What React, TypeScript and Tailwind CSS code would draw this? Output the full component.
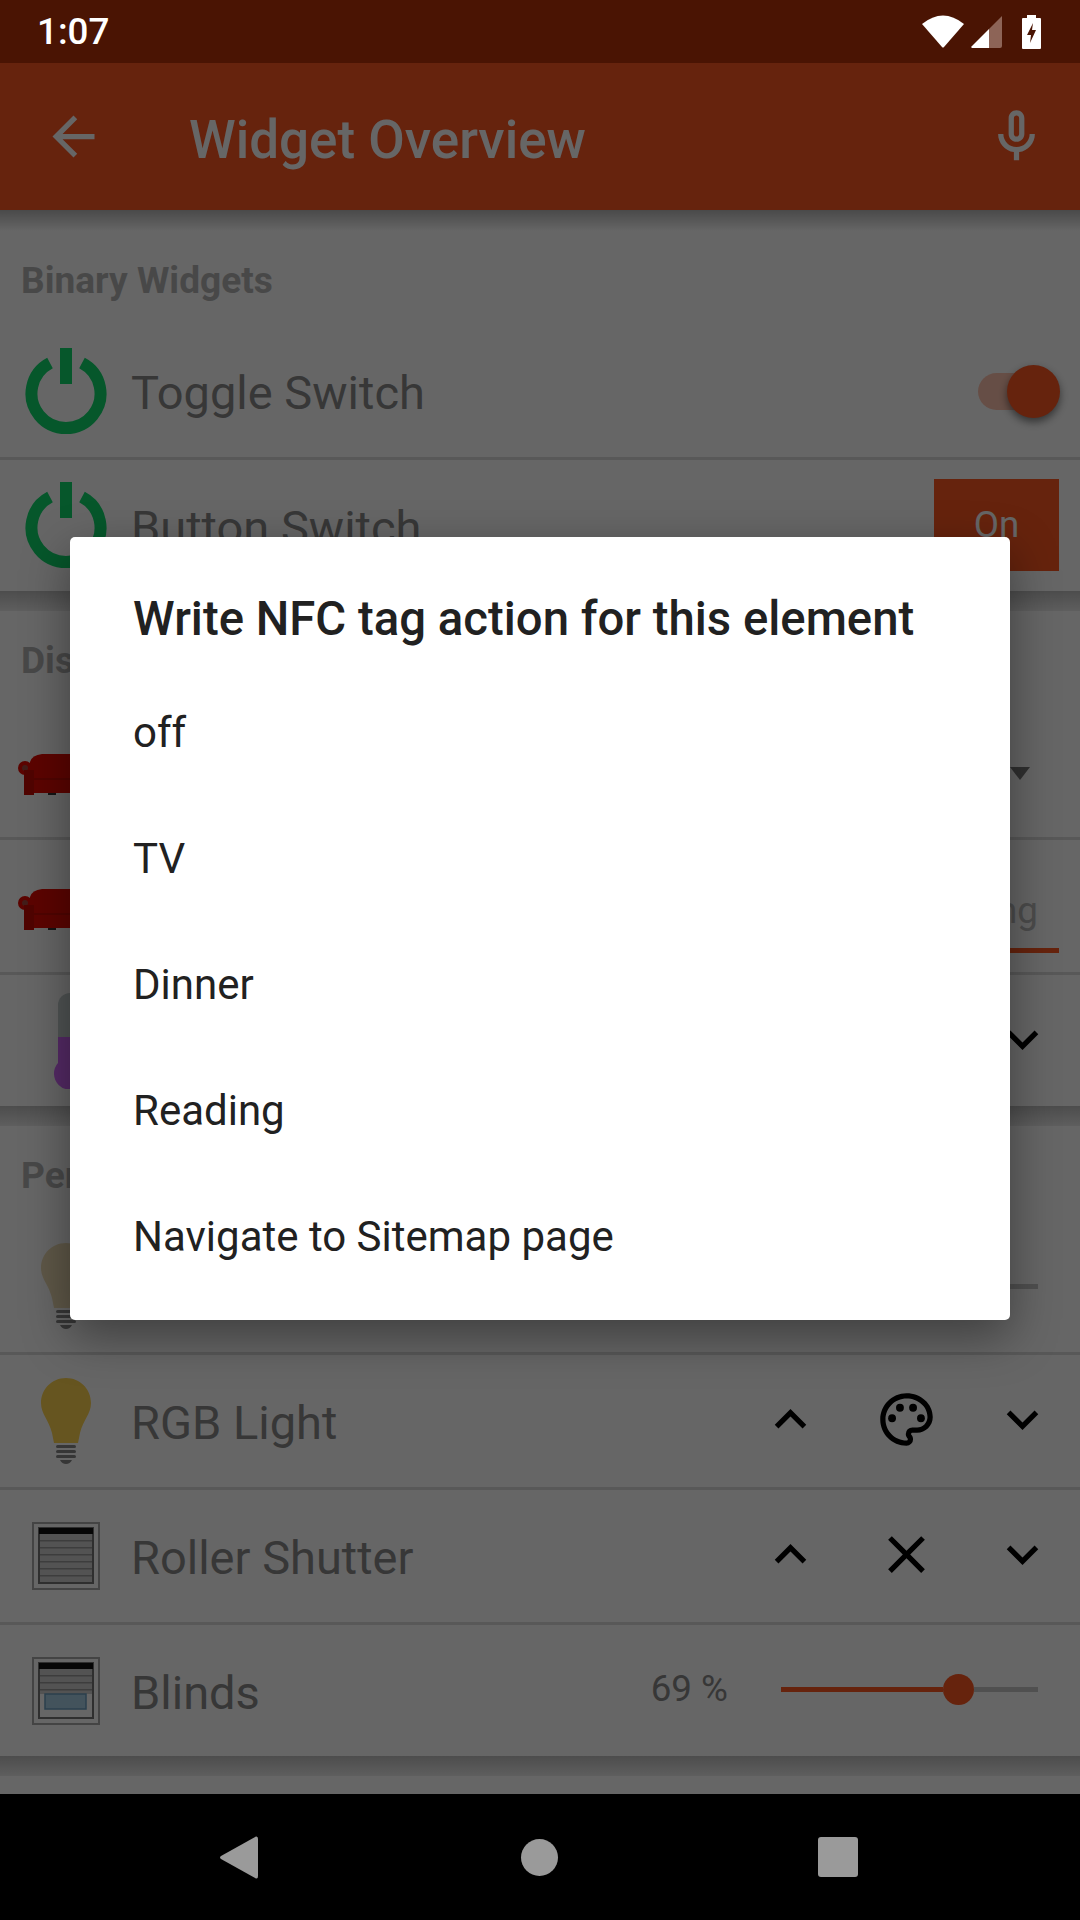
import React from 'react'

function Svg({ d, className, children }: { d: string; className: string; children?: React.ReactNode }) {
  return (
    <svg viewBox="0 0 24 24" className={className} fill="currentColor">
      <path d={d} />
      {children}
    </svg>
  )
}

const chevronUp = 'M12 8l-6 6 1.41 1.41L12 10.83l4.59 4.58L18 14z'
const chevronDown = 'M16.59 8.59L12 13.17 7.41 8.59 6 10l6 6 6-6z'
const closeIcon = 'M19 6.41L17.59 5 12 10.59 6.41 5 5 6.41 10.59 12 5 17.59 6.41 19 12 13.41 17.59 19 19 17.59 13.41 12z'
const paletteIcon =
  'M12 22C6.49 22 2 17.51 2 12S6.49 2 12 2s10 4.04 10 9c0 3.31-2.69 6-6 6h-1.77c-.28 0-.5.22-.5.5 0 .12.05.23.13.33.41.47.64 1.06.64 1.67A2.5 2.5 0 0 1 12 22zm0-18c-4.41 0-8 3.59-8 8s3.59 8 8 8c.28 0 .5-.22.5-.5a.54.54 0 0 0-.14-.35c-.41-.46-.63-1.05-.63-1.65a2.5 2.5 0 0 1 2.5-2.5H16c2.21 0 4-1.79 4-4 0-3.86-3.59-7-8-7z'

function PowerIcon() {
  return (
    <svg viewBox="0 0 82 88" className="w-[82px] h-[88px] mt-[1px]">
      <path d="M25 15 A34.5 34.5 0 1 0 57 15" fill="none" stroke="#0fd96c" strokeWidth="12" />
      <rect x="35" y="0" width="12" height="36" fill="#0fd96c" />
    </svg>
  )
}

function SofaIcon() {
  return (
    <svg viewBox="0 0 96 42" className="w-[96px] h-[42px] mt-[6px]">
      <path d="M12 9 Q14 2 24 1 H72 Q82 2 84 9 L86 40 H8z" fill="#e60c00" />
      <circle cx="7" cy="15" r="7" fill="#e60c00" />
      <circle cx="7" cy="15" r="3" fill="#a84a40" />
      <circle cx="89" cy="15" r="7" fill="#e60c00" />
      <rect x="6" y="17" width="10" height="25" fill="#c80a00" />
      <rect x="30" y="40" width="8" height="2" fill="#333" />
      <rect x="16" y="25" width="66" height="2" fill="#c80a00" />
    </svg>
  )
}

function ThermoIcon() {
  return (
    <svg viewBox="0 0 60 96" className="w-[60px] h-[96px] ml-[16px]">
      <path d="M14 12 a12 12 0 0 1 24 0 V50 H14z" fill="#c8d2d2" />
      <path d="M14 44 H38 V70 A16 16 0 1 1 14 70z" fill="#d469ff" />
      <rect x="26" y="14" width="10" height="2" fill="#eee" />
      <rect x="26" y="26" width="10" height="2" fill="#eee" />
      <rect x="26" y="38" width="10" height="2" fill="#eee" />
      <rect x="26" y="50" width="10" height="2" fill="#eee" />
      <rect x="26" y="62" width="10" height="2" fill="#eee" />
    </svg>
  )
}

function BulbIcon({ color }: { color: string }) {
  return (
    <svg viewBox="0 0 50 86" className="w-[50px] h-[86px]">
      <path
        d="M25 0 C11 0 0 11 0 25 C0 36 8 42 11 55 L13 65 H37 L39 55 C42 42 50 36 50 25 C50 11 39 0 25 0z"
        fill={color}
      />
      <rect x="15" y="67" width="20" height="3" rx="1.5" fill="#888" />
      <rect x="15" y="72" width="20" height="3" rx="1.5" fill="#888" />
      <rect x="15" y="77" width="20" height="3" rx="1.5" fill="#888" />
      <path d="M19 82 H31 Q29 86 25 86 Q21 86 19 82z" fill="#888" />
    </svg>
  )
}

function ShutterIcon({ blinds }: { blinds?: boolean }) {
  const slats = blinds ? [14, 21, 28] : [14, 21, 28, 35, 42, 49]
  return (
    <svg viewBox="0 0 68 68" className="w-[68px] h-[68px]">
      <rect x="1" y="1" width="66" height="66" fill="#fff" stroke="#aaa" strokeWidth="2" />
      <rect x="7" y="6" width="54" height="55" fill="#fff" stroke="#777" strokeWidth="2" />
      <rect x="7" y="6" width="54" height="6" fill="#111" />
      {!blinds && <rect x="8" y="12" width="52" height="48" fill="#d0d0d0" />}
      {blinds && <rect x="8" y="12" width="52" height="25" fill="#d0d0d0" />}
      {blinds && <rect x="13" y="37" width="41" height="15" fill="#a8cfe6" stroke="#6b9ec0" strokeWidth="1.5" />}
      {slats.map((y) => (
        <rect key={y} x="8" y={y + 4} width="52" height="1.5" fill="#9a9a9a" />
      ))}
    </svg>
  )
}

function Row({ icon, label, right, line = true, height = 'h-[132px]' }: { icon: React.ReactNode; label: string; right?: React.ReactNode; line?: boolean; height?: string }) {
  return (
    <>
      <div className={`flex items-center ${height}`}>
        <div className="w-[131px] shrink-0 flex justify-center">{icon}</div>
        <span className="text-[47px] leading-none mt-[3px] text-[#8a8a8a]">{label}</span>
        <div className="ml-auto flex items-center">{right}</div>
      </div>
      {line && <div className="h-[3px] bg-[#dcdcdc]" />}
    </>
  )
}

function Header({ title }: { title: string }) {
  return (
    <div className="h-[94px] pl-[21px] pt-[28px] text-[37.1px] leading-[44px] font-bold text-[#b4b4b4]">{title}</div>
  )
}

function Band() {
  return <div className="h-[20px] bg-gradient-to-b from-[#c0c0c0] to-[#ececec]" />
}

function Updown({ middle }: { middle: React.ReactNode }) {
  return (
    <div className="flex items-center gap-[53px] pr-[26px] -mt-[3px] text-black">
      <Svg d={chevronUp} className="w-[63px] h-[63px]" />
      {middle}
      <Svg d={chevronDown} className="w-[63px] h-[63px]" />
    </div>
  )
}

export default function App() {
  const actions = ['off', 'TV', 'Dinner', 'Reading', 'Navigate to Sitemap page']

  return (
    <div className="w-[1080px] h-[1920px] flex flex-col overflow-hidden bg-black font-['Roboto',sans-serif]">
      {/* status bar */}
      <div className="h-[63px] shrink-0 bg-[#4a1403] flex items-center pl-[37px] pr-[39px] text-white">
        <span className="text-[36.75px] font-medium leading-none mt-[1px]">1:07</span>
        <div className="ml-auto flex items-center">
          <svg viewBox="0 0 42 33" className="w-[42px] h-[33px]">
            <path d="M0 9 Q21 -8 42 9 L22 32 Q21 33 20 32z" fill="#fff" />
          </svg>
          <svg viewBox="0 0 32 32" className="w-[32px] h-[32px] ml-[7px]">
            <path d="M0 31 L18 13 V32 H1z" fill="#fff" />
            <path d="M18 13 L31 0 V30 Q31 32 29 32 H18z" fill="#8d6457" />
          </svg>
          <svg viewBox="0 0 19 34" className="w-[19px] h-[34px] ml-[19px]">
            <path d="M5 0 H14 V3 H18 Q19 3 19 4 V33 Q19 34 18 34 H1 Q0 34 0 33 V4 Q0 3 1 3 H5z" fill="#fff" />
            <path d="M11 8 L5 20 H9 L8 28 L14 15 H10z" fill="#4a1403" />
          </svg>
        </div>
      </div>

      <div className="relative flex-1 bg-white overflow-hidden">
        {/* page under the dialog */}
        <div className="h-[147px] bg-[#ff5722] flex items-center text-white relative">
          <Svg d="M20 11H7.83l5.59-5.59L12 4l-8 8 8 8 1.41-1.41L7.83 13H20v-2z" className="w-[63px] h-[63px] ml-[42px]" />
          <span className="ml-[84px] mt-[7px] text-[53px] font-medium leading-none">Widget Overview</span>
          <Svg
            d="M12 14c1.66 0 3-1.34 3-3V5c0-1.66-1.34-3-3-3S9 3.34 9 5v6c0 1.66 1.34 3 3 3zm-1-9c0-.55.45-1 1-1s1 .45 1 1v6c0 .55-.45 1-1 1s-1-.45-1-1V5zm6 6c0 2.76-2.24 5-5 5s-5-2.24-5-5H5c0 3.53 2.61 6.43 6 6.92V21h2v-3.08c3.39-.49 6-3.39 6-6.92h-2z"
            className="w-[63px] h-[63px] ml-auto mr-[32px]"
          />
        </div>
        <div className="h-[21px] bg-gradient-to-b from-[#b8b8b8] to-white" />

        <Header title="Binary Widgets" />
        <Row
          icon={<PowerIcon />}
          label="Toggle Switch"
          right={
            <div className="relative w-[82px] h-[53px] mr-[20px]">
              <div className="absolute left-0 top-[8px] w-[62px] h-[37px] rounded-full bg-[#ffc4b0]" />
              <div className="absolute right-0 top-0 w-[53px] h-[53px] rounded-full bg-[#ff5722] shadow-[0_4px_8px_rgba(0,0,0,0.5)]" />
            </div>
          }
        />
        <Row
          icon={<PowerIcon />}
          label="Button Switch"
          line={false}
          height="h-[131px]"
          right={
            <div className="w-[125px] h-[92px] mr-[21px] mb-[2px] bg-[#ff5722] text-white flex items-center justify-center text-[36.75px]">On</div>
          }
        />
        <Band />

        <Header title="Discrete Widgets" />
        <Row
          icon={<SofaIcon />}
          label="Scene Selection"
          right={
            <div className="mr-[50px] mt-[5px] w-0 h-0 border-l-[10px] border-r-[10px] border-t-[13px] border-l-transparent border-r-transparent border-t-[#787878]" />
          }
        />
        <Row
          icon={<SofaIcon />}
          label="Scene Selection"
          right={
            <div className="w-[250px] mr-[21px] mt-[30px] border-b-[5px] border-[#ff5722] text-right pr-[21px] pb-[15px] text-[36.75px] leading-[44px] text-[#bdbdbd]">Reading</div>
          }
        />
        <Row
          icon={<ThermoIcon />}
          label="Setpoint"
          line={false}
          height="h-[131px]"
          right={<Updown middle={<span className="w-[63px] text-[36.75px] text-[#8a8a8a]">22</span>} />}
        />
        <Band />

        <Header title="Percent-based Widgets" />
        <Row
          icon={<BulbIcon color="#eedcb4" />}
          label="Dimmer"
          right={
            <div className="flex items-center w-[257px] mr-[42px]">
              <div className="w-[20px] h-[5px] bg-[#ff5722]" />
              <div className="w-[31px] h-[31px] rounded-full bg-[#ff5722]" />
              <div className="flex-1 h-[5px] bg-[#c8c8c8]" />
            </div>
          }
        />
        <Row
          icon={<BulbIcon color="#ffd450" />}
          label="RGB Light"
          right={
            <Updown
              middle={
                <Svg d={paletteIcon} className="w-[63px] h-[63px]">
                  <circle cx="6.5" cy="11.5" r="1.5" />
                  <circle cx="9.5" cy="7.5" r="1.5" />
                  <circle cx="14.5" cy="7.5" r="1.5" />
                  <circle cx="17.5" cy="11.5" r="1.5" />
                </Svg>
              }
            />
          }
        />
        <Row
          icon={<ShutterIcon />}
          label="Roller Shutter"
          right={<Updown middle={<Svg d={closeIcon} className="w-[63px] h-[63px]" />} />}
        />
        <Row
          icon={<ShutterIcon blinds />}
          label="Blinds"
          line={false}
          height="h-[131px]"
          right={
            <div className="flex items-center gap-[53px] pr-[42px] -mt-[2px]">
              <span className="text-[36.75px] leading-none text-[#8a8a8a]">69 %</span>
              <div className="flex items-center w-[257px]">
                <div className="w-[162px] h-[5px] bg-[#ff5722]" />
                <div className="w-[31px] h-[31px] rounded-full bg-[#ff5722]" />
                <div className="flex-1 h-[5px] bg-[#c8c8c8]" />
              </div>
            </div>
          }
        />
        <Band />

        {/* scrim and dialog */}
        <div className="absolute inset-0 bg-black/60 flex items-center justify-center">
          <div className="w-[940px] h-[783px] mb-[1px] bg-white rounded-[5px] shadow-[0_16px_48px_rgba(0,0,0,0.4)]">
            <div className="h-[133px] pl-[63px] pt-[54px] text-[47.3px] leading-[56px] font-medium text-[#212121]">
              Write NFC tag action for this element
            </div>
            {actions.map((a) => (
              <div key={a} className="h-[126px] pl-[63px] flex items-center text-[42px] leading-none text-[#212121]">
                {a}
              </div>
            ))}
          </div>
        </div>
      </div>

      {/* navigation bar */}
      <div className="h-[126px] shrink-0 bg-black relative flex items-center">
        <svg viewBox="0 0 38 43" className="w-[38px] h-[43px] ml-[220px]">
          <path d="M36 0.5 Q38 0 38 3 V40 Q38 43 36 42.5 L1 23 Q-1 21.5 1 20z" fill="#9a9a9a" />
        </svg>
        <div className="w-[37px] h-[37px] rounded-full bg-[#9a9a9a] ml-[263px]" />
        <div className="w-[40px] h-[40px] rounded-[3px] bg-[#9a9a9a] ml-[260px]" />
      </div>
    </div>
  )
}
